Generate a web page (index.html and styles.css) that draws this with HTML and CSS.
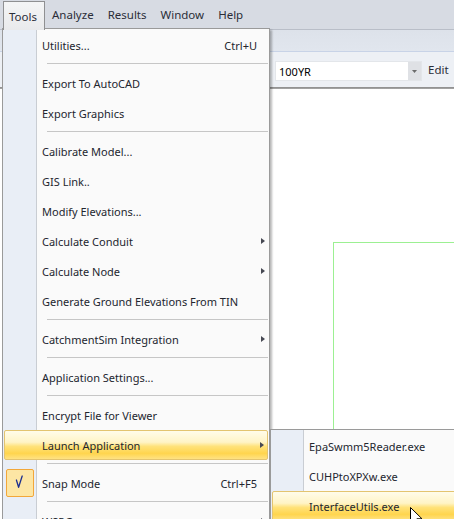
FILE: index.html
```html
<!DOCTYPE html>
<html>
<head>
<meta charset="utf-8">
<link rel="stylesheet" href="styles.css">
</head>
<body>
<div class="app">
  <div class="menubar">
    <span class="mb-item active">Tools</span>
    <span class="mb-item">Analyze</span>
    <span class="mb-item">Results</span>
    <span class="mb-item">Window</span>
    <span class="mb-item">Help</span>
  </div>
  <div class="ribbon-top"></div>
  <div class="toolbar">
    <div class="combo">
      <span class="combo-text">100YR</span>
      <span class="combo-btn"><svg width="5" height="3" viewBox="0 0 5 3"><path d="M0 0H5L2.5 3Z" fill="#6b6b6b"/></svg></span>
    </div>
    <span class="tb-edit">Edit</span>
  </div>
  <div class="divider"></div>
  <div class="workspace">
    <div class="green-rect"></div>
  </div>
</div>

<div class="menu">
  <div class="mi"><span class="ico"></span><span class="label">Utilities...</span><span class="sc">Ctrl+U</span></div>
  <div class="sep"></div>
  <div class="mi"><span class="ico"></span><span class="label">Export To AutoCAD</span></div>
  <div class="mi"><span class="ico"></span><span class="label">Export Graphics</span></div>
  <div class="sep"></div>
  <div class="mi"><span class="ico"></span><span class="label">Calibrate Model...</span></div>
  <div class="mi"><span class="ico"></span><span class="label">GIS Link..</span></div>
  <div class="mi"><span class="ico"></span><span class="label">Modify Elevations...</span></div>
  <div class="mi"><span class="ico"></span><span class="label">Calculate Conduit</span><span class="arrow"></span></div>
  <div class="mi"><span class="ico"></span><span class="label">Calculate Node</span><span class="arrow"></span></div>
  <div class="mi"><span class="ico"></span><span class="label">Generate Ground Elevations From TIN</span></div>
  <div class="sep"></div>
  <div class="mi"><span class="ico"></span><span class="label">CatchmentSim Integration</span><span class="arrow"></span></div>
  <div class="sep"></div>
  <div class="mi"><span class="ico"></span><span class="label">Application Settings...</span></div>
  <div class="sep"></div>
  <div class="mi"><span class="ico"></span><span class="label">Encrypt File for Viewer</span></div>
  <div class="mi hot"><span class="ico"></span><span class="label">Launch Application</span><span class="arrow"></span></div>
  <div class="sep"></div>
  <div class="mi"><span class="ico checked"><svg width="28" height="28" viewBox="0 0 28 28"><path d="M10.4 11L12.6 18.3L16.2 7" fill="none" stroke="#1d2f8f" stroke-width="1.3" stroke-linejoin="round" stroke-linecap="round"/></svg></span><span class="label">Snap Mode</span><span class="sc">Ctrl+F5</span></div>
  <div class="sep"></div>
  <div class="mi"><span class="ico"></span><span class="label">WSPG...</span><span class="arrow"></span></div>
</div>

<div class="submenu">
  <div class="smi"><span class="label">EpaSwmm5Reader.exe</span></div>
  <div class="smi"><span class="label">CUHPtoXPXw.exe</span></div>
  <div class="smi hot"><span class="label">InterfaceUtils.exe</span></div>
</div>

<svg class="cursor" width="13" height="20" viewBox="0 0 13 20"><path d="M0.5 0.5V16.5L4.5 12.7L7.3 19L9.6 18L6.9 11.8H12Z" fill="#fff" stroke="#000" stroke-width="1" stroke-linejoin="miter"/></svg>
</body>
</html>
```

FILE: styles.css
```css
html, body {
  margin: 0;
  padding: 0;
}
body {
  width: 454px;
  height: 519px;
  overflow: hidden;
  position: relative;
  font-family: "Noto Sans", "Open Sans", sans-serif;
  font-size: 11px;
  color: #23262f;
  background: #ffffff;
}
.app {
  display: flex;
  flex-direction: column;
  height: 519px;
}
.menubar {
  height: 29px;
  border-bottom: 1px solid #b9bec8;
  background: #d7dbe3;
  display: flex;
  align-items: stretch;
  padding-left: 3px;
  box-sizing: content-box;
  font-size: 11.5px;
}
.mb-item {
  display: flex;
  align-items: center;
  padding: 0 7px 0 7px;
  color: #2a2d38;
}
.mb-item.active {
  position: relative;
  z-index: 3;
  margin-top: 1px;
  height: 29px;
  box-sizing: border-box;
  padding: 0 7px 0 5px;
  border: 1px solid #8f9092;
  border-bottom: none;
  background: linear-gradient(#f4f5f6, #e9eaec);
  margin-right: 0;
}
.ribbon-top {
  height: 21px;
  background: linear-gradient(#dde2ea, #e1e6ee);
  border-bottom: 1px solid #c8d3e7;
}
.toolbar {
  height: 35px;
  background: #edf0f5;
  display: flex;
  align-items: flex-start;
  padding-left: 275px;
  padding-top: 9px;
  box-sizing: border-box;
  gap: 6px;
}
.combo {
  width: 147px;
  height: 20px;
  box-sizing: border-box;
  background: #ffffff;
  border: 1px solid #e3e6ea;
  display: flex;
  align-items: stretch;
}
.combo-text {
  flex: 1;
  display: flex;
  align-items: center;
  padding-left: 3px;
  color: #000000;
}
.combo-btn {
  width: 13px;
  background: #dfe1e5;
  display: flex;
  align-items: center;
  justify-content: center;
}
.tb-edit {
  color: #2a2d38;
  line-height: 18px;
  font-size: 11.5px;
}
.divider {
  height: 2px;
  background: linear-gradient(#8a8a8a, #a9a9a9);
}
.workspace {
  flex: 1;
  position: relative;
  background: #ffffff;
}
.green-rect {
  position: absolute;
  left: 333px;
  top: 153px;
  width: 300px;
  height: 400px;
  border-top: 1px solid #9cf092;
  border-left: 1px solid #9cf092;
}

/* Dropdown menu */
.menu {
  position: absolute;
  z-index: 2;
  left: 2px;
  top: 28px;
  width: 268px;
  box-sizing: border-box;
  border: 1px solid #9a9a9a;
  padding: 1px 0;
  background: linear-gradient(to right, #e9eef6 0, #e9eef6 33px, #c9cdd3 33px, #c9cdd3 34px, #fafafa 34px);
  box-shadow: 2px 2px 2px rgba(0, 0, 0, 0.28);
}
.mi {
  height: 30px;
  box-sizing: border-box;
  display: flex;
  align-items: center;
  padding: 0 12px 0 3px;
  white-space: nowrap;
}
.ico {
  width: 28px;
  height: 28px;
  flex: none;
  margin-right: 8px;
  box-sizing: border-box;
}
.ico.checked {
  background: #fde6a4;
  border: 1px solid #f2a73a;
  border-radius: 2px;
}
.ico.checked svg {
  display: block;
  margin: -1px;
}
.label {
  flex: 1;
}
.sc {
  flex: none;
}
.arrow {
  flex: none;
  width: 0;
  height: 0;
  border-left: 4px solid #464852;
  border-top: 3.5px solid transparent;
  border-bottom: 3.5px solid transparent;
  margin-right: -8px;
}
.mi.hot {
  margin: 0 1px;
  padding-left: 1px;
  padding-right: 11px;
  border: 1px solid #e3c470;
  border-radius: 2px;
  background: linear-gradient(#fffcea 0%, #fff4c6 40%, #ffe27a 55%, #ffd54e 80%, #ffe283 100%);
}
.sep {
  height: 8px;
  box-sizing: border-box;
  padding: 3px 1px 0 44px;
}
.sep::before {
  content: "";
  display: block;
  height: 1px;
  background: #c6c6c6;
}

/* Sub menu */
.submenu {
  position: absolute;
  z-index: 4;
  left: 270px;
  top: 429px;
  width: 200px;
  box-sizing: border-box;
  border: 1px solid #9a9a9a;
  padding: 1px 0;
  background: linear-gradient(to right, #e9eef6 0, #e9eef6 32px, #c9cdd3 32px, #c9cdd3 33px, #fafafa 33px);
}
.smi {
  height: 30px;
  box-sizing: border-box;
  display: flex;
  align-items: center;
  padding-left: 38px;
  white-space: nowrap;
}
.smi.hot {
  margin-left: 1px;
  padding-left: 36px;
  border: 1px solid #e3c470;
  border-radius: 2px;
  background: linear-gradient(#fffcea 0%, #fff4c6 40%, #ffe27a 55%, #ffd54e 80%, #ffe283 100%);
}
.cursor {
  position: absolute;
  z-index: 5;
  left: 410px;
  top: 507px;
}
```
